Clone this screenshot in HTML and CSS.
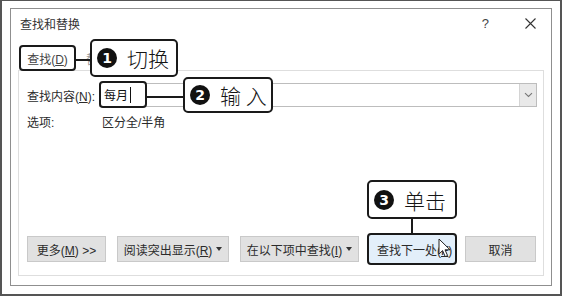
FILE: index.html
```html
<!DOCTYPE html>
<html lang="zh-CN">
<head>
  <meta charset="UTF-8" />
  <title>查找和替换</title>
  <link rel="stylesheet" href="styles.css">
</head>
<body>
  <div class="frame">
    <div class="dialog">
      <!-- TITLE -->
      <div class="titlebar">
        <span class="title">查找和替换</span>
        <span class="help">?</span>
        <svg class="close" width="11" height="11" viewBox="0 0 11 11">
          <path d="M0.5 0.5 L10.5 10.5 M10.5 0.5 L0.5 10.5" stroke="#333" stroke-width="1.1" fill="none" />
        </svg>
      </div>

      <!-- TABS -->
      <div class="tabs">
        <span class="tab mark"><span>查找(<u>D</u>)</span></span>
        <span class="tab hidden-tab"><span>替换(<u>P</u>)</span></span>
      </div>

      <!-- PANEL -->
      <div class="panel">
        <div class="row">
          <span class="lbl">查找内容(<u>N</u>):</span>
          <div class="combo">
            <span class="value">每月<i class="caret"></i></span>
            <span class="drop">
              <svg width="9" height="6" viewBox="0 0 9 6">
                <path d="M1 1.2 L4.5 4.5 L8 1.2" stroke="#777" stroke-width="1.1" fill="none" />
              </svg>
            </span>
          </div>
        </div>
        <div class="row opts">
          <span class="lbl">选项:</span>
          <span>区分全/半角</span>
        </div>

        <div class="buttons">
          <button class="btn w-more"><span>更多(<u>M</u>) &gt;&gt;</span></button>
          <button class="btn w-read"><span>阅读突出显示(<u>R</u>)</span><i class="tri"></i></button>
          <button class="btn w-in"><span>在以下项中查找(<u>I</u>)</span><i class="tri"></i></button>
          <button class="btn w-next"><span>查找下一处(<u>F</u>)</span></button>
          <button class="btn w-cancel"><span>取消</span></button>
        </div>
      </div>
    </div>

    <!-- CALLOUTS -->
    <div class="link l1"></div>
    <div class="callout c1"><span class="num">1</span>切换</div>
    <div class="link l2"></div>
    <div class="callout c2"><span class="num">2</span>输 入</div>
    <div class="link l3"></div>
    <div class="callout c3"><span class="num">3</span>单击</div>

    <svg class="cursor" width="14" height="20" viewBox="0 0 14 20">
      <path d="M1 1 L1 16 L4.6 12.6 L7.2 18.6 L9.6 17.6 L7 11.8 L12 11.8 Z" fill="#fff" stroke="#222" stroke-width="1" stroke-linejoin="round" />
    </svg>
  </div>
</body>
</html>
```

FILE: styles.css
```css
:root {
  --ink: #1a1a1a;
  --ui-text: #2b2b2b;
  --btn-bg: #e1e1e1;
  --btn-line: #c9c9c9;
  --panel-line: #dedede;
  --ui-font: "Liberation Sans", "Noto Sans CJK SC", sans-serif;
}
* {
  box-sizing: border-box;
  margin: 0;
  padding: 0;
}
body {
  background: #fff;
  font-family: var(--ui-font);
}
u {
  text-decoration: underline;
  text-underline-offset: 1px;
}

/* FRAME */
.frame {
  position: relative;
  width: 562px;
  height: 296px;
  background: #fff;
  border: 2px solid #555;
  border-top-width: 1px;
  padding: 7px 0 0 8px;
}
.dialog {
  width: 542px;
  height: 278px;
  border: 1px solid #8f8f8f;
  display: flex;
  flex-direction: column;
  color: var(--ui-text);
  font-size: 12px;
}

/* TITLE */
.titlebar {
  height: 29px;
  display: flex;
  align-items: center;
  padding: 0 15px 0 9px;
}
.title {
  flex: 1;
  color: #333;
}
.help {
  font-size: 13px;
  color: #444;
  margin-right: 36px;
}

/* TABS */
.tabs {
  height: 33px;
  display: flex;
  align-items: flex-end;
  gap: 10px;
  padding-left: 8px;
  margin-bottom: -1px;
  position: relative;
  z-index: 1;
}
.tab {
  height: 26px;
  display: flex;
  align-items: center;
  color: #444;
  white-space: nowrap;
}
.tab.mark {
  width: 57px;
  justify-content: center;
  border: 2px solid var(--ink);
  border-radius: 4px;
  background: #fff;
}
.hidden-tab {
  color: #999;
}

/* PANEL */
.panel {
  flex: 1;
  margin: 0 7px 9px;
  border: 1px solid var(--panel-line);
  display: flex;
  flex-direction: column;
  padding: 12px 6px 13px 8px;
}
.row {
  display: flex;
  align-items: center;
}
.row .lbl {
  width: 72px;
}
.combo {
  position: relative;
  flex: 1;
  height: 24px;
  border: 1px solid #bdbdbd;
  display: flex;
  justify-content: flex-end;
}
.value {
  position: absolute;
  left: -1px;
  top: -3px;
  width: 48px;
  height: 27px;
  border: 2px solid var(--ink);
  border-radius: 4px;
  background: #fff;
  display: flex;
  align-items: center;
  padding-left: 3px;
  color: #111;
}
.caret {
  display: inline-block;
  width: 1px;
  height: 16px;
  background: #111;
  margin-left: 2px;
}
.drop {
  width: 17px;
  background: #e9e9e9;
  border-left: 1px solid #d4d4d4;
  display: flex;
  align-items: center;
  justify-content: center;
}
.opts {
  margin-top: 6px;
  height: 16px;
}
.opts .lbl + span {
  padding-left: 3px;
}

/* BUTTONS */
.buttons {
  margin-top: auto;
  display: flex;
  align-items: center;
  gap: 11px;
  height: 26px;
}
.btn {
  height: 26px;
  background: var(--btn-bg);
  border: 1px solid var(--btn-line);
  font-family: var(--ui-font);
  font-size: 12px;
  color: var(--ui-text);
  display: flex;
  align-items: center;
  justify-content: center;
  gap: 4px;
  white-space: nowrap;
}
.w-more { width: 79px; }
.w-read { width: 112px; }
.w-in { width: 119px; }
.w-cancel { width: 71px; }
.w-next {
  width: 90px;
  height: 32px;
  margin: 0 -3px;
  background: #e3effa;
  border: 2px solid var(--ink);
  border-radius: 4px;
  justify-content: flex-start;
  padding-left: 8px;
  overflow: hidden;
}
.tri {
  width: 0;
  height: 0;
  border-left: 3.5px solid transparent;
  border-right: 3.5px solid transparent;
  border-top: 4px solid #333;
}

/* CALLOUTS */
.callout {
  position: absolute;
  background: #fff;
  border: 2px solid var(--ink);
  border-radius: 5px;
  display: flex;
  align-items: center;
  gap: 10px;
  padding-left: 5px;
  font-family: "Noto Sans CJK SC", sans-serif;
  font-size: 21px;
  font-weight: 300;
  color: #151515;
  white-space: pre;
  z-index: 2;
}
.num {
  width: 20px;
  height: 20px;
  border-radius: 50%;
  background: #111;
  color: #fff;
  font-family: "DejaVu Sans", sans-serif;
  font-weight: 700;
  font-size: 14px;
  display: flex;
  align-items: center;
  justify-content: center;
}
.c1 { left: 88px; top: 38px; width: 88px; height: 38px; }
.c2 { left: 181px; top: 76px; width: 90px; height: 36px; }
.c3 { left: 365px; top: 179px; width: 90px; height: 39px; }

.link {
  position: absolute;
  background: var(--ink);
  z-index: 2;
}
.l1 { left: 74px; top: 58px; width: 14px; height: 2px; }
.l2 { left: 145px; top: 95px; width: 36px; height: 2px; }
.l3 { left: 409px; top: 217px; width: 2px; height: 15px; }

.cursor {
  position: absolute;
  left: 436px;
  top: 237px;
  z-index: 3;
}
```
